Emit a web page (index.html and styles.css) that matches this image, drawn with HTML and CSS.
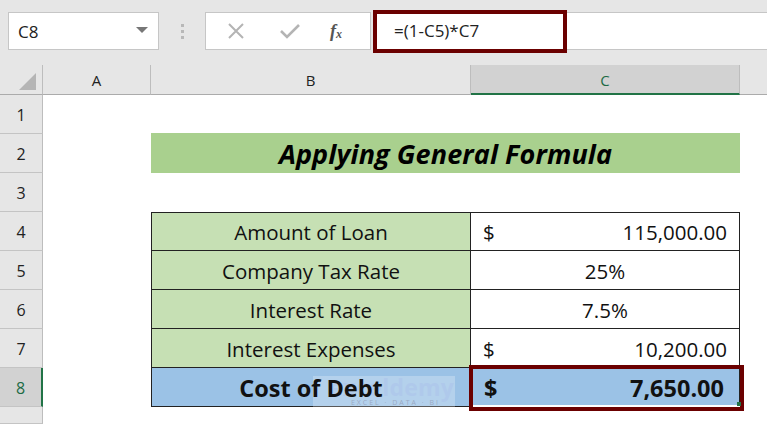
FILE: index.html
```html
<!DOCTYPE html>
<html>
<head>
<meta charset="utf-8">
<link rel="stylesheet" href="styles.css">
</head>
<body>
<div class="app">
  <div class="fbar">
    <div class="namebox"><span class="nb-text">C8</span><span class="nb-arrow"></span></div>
    <div class="dots"><i></i><i></i><i></i></div>
    <div class="btns">
      <svg class="ico-x" width="18" height="18" viewBox="0 0 18 18"><path d="M2 2 L16 16 M16 2 L2 16" stroke="#b4b4b4" stroke-width="2" fill="none"/></svg>
      <svg class="ico-ok" width="22" height="18" viewBox="0 0 22 18"><path d="M2 9 L8 15 L20 3" stroke="#b4b4b4" stroke-width="2.6" fill="none"/></svg>
      <span class="fx"><i>f</i><sub>x</sub></span>
    </div>
    <div class="fwrap">
      <div class="fbox">=(1-C5)*C7</div>
      <div class="frest"></div>
    </div>
  </div>
  <div class="sheet">
    <div class="corner"><span class="tri"></span></div>
    <div class="ch">A</div>
    <div class="ch">B</div>
    <div class="ch sel">C</div>
    <div class="ch last"></div>

    <div class="rh" style="grid-row:2">1</div>
    <div class="rh" style="grid-row:3">2</div>
    <div class="rh" style="grid-row:4">3</div>
    <div class="rh" style="grid-row:5">4</div>
    <div class="rh" style="grid-row:6">5</div>
    <div class="rh" style="grid-row:7">6</div>
    <div class="rh" style="grid-row:8">7</div>
    <div class="rh sel" style="grid-row:9">8</div>
    <div class="rh" style="grid-row:10"></div>

    <div class="title">Applying General Formula</div>

    <div class="lab top" style="grid-row:5">Amount of Loan</div>
    <div class="val top" style="grid-row:5"><span>$</span><span>115,000.00</span></div>
    <div class="lab" style="grid-row:6">Company Tax Rate</div>
    <div class="val mid" style="grid-row:6">25%</div>
    <div class="lab" style="grid-row:7">Interest Rate</div>
    <div class="val mid" style="grid-row:7">7.5%</div>
    <div class="lab" style="grid-row:8">Interest Expenses</div>
    <div class="val" style="grid-row:8"><span>$</span><span>10,200.00</span></div>
    <div class="lab res" style="grid-row:9">
      <div class="wm"><span class="wm-name">exceldemy</span><span class="wm-sub">EXCEL · DATA · BI</span></div>
      <span class="res-text">Cost of Debt</span>
    </div>
    <div class="val res" style="grid-row:9"><span>$</span><span>7,650.00</span><div class="selbox"><span class="handle"></span></div></div>
  </div>
</div>
</body>
</html>
```
FILE: styles.css
```css
* { box-sizing: border-box; }
html, body { margin: 0; padding: 0; }
body { width: 767px; height: 424px; overflow: hidden; background: #fff; font-family: "Open Sans", "Noto Sans", sans-serif; }
.app { width: 767px; height: 424px; display: flex; flex-direction: column; }

.fbar { height: 65px; background: #e6e6e6; display: flex; align-items: flex-start; padding: 12px 0 0 8px; flex: none; }
.namebox { width: 151px; height: 38px; background: #fff; border: 1px solid #c6c6c6; display: flex; align-items: center; justify-content: space-between; padding: 0 10px 0 9px; }
.nb-text { font-size: 17px; color: #222; }
.nb-arrow { width: 0; height: 0; border-left: 6px solid transparent; border-right: 6px solid transparent; border-top: 6px solid #777; margin-top: -2px; }
.dots { width: 46px; height: 38px; display: flex; flex-direction: column; align-items: center; justify-content: center; gap: 3px; }
.dots i { width: 3px; height: 3px; background: #b8b8b8; display: block; }
.btns { width: 166px; height: 38px; background: #fff; border: 1px solid #c6c6c6; display: flex; align-items: center; padding: 0 0 0 21px; }
.ico-x { margin-right: 34px; }
.ico-ok { margin-right: 29px; }
.fx { font-family: "Liberation Serif", serif; font-style: italic; font-weight: bold; font-size: 18px; color: #555; }
.fx i { font-style: italic; }
.fx sub { font-size: 12px; vertical-align: -1px; }
.fwrap { flex: 1; height: 38px; display: flex; align-items: center; margin-left: 2px; }
.fbox { width: 194px; height: 43px; border: 4px solid #6b0000; background: #fff; font-size: 17px; color: #222; padding: 5px 0 0 17px; flex: none; }
.frest { flex: 1; height: 38px; background: #fff; border-top: 1px solid #c6c6c6; border-bottom: 1px solid #c6c6c6; }

.sheet { flex: 1; display: grid; grid-template-columns: 43px 108px 320px 269px 1fr; grid-template-rows: 30px repeat(8, 39px) 1fr; background: #fff; font-family: "Open Sans", sans-serif; position: relative; }
.corner { grid-row: 1; grid-column: 1; background: #e6e6e6; border-right: 1px solid #bdbdbd; border-bottom: 1px solid #ababab; position: relative; }
.tri { position: absolute; right: 6px; bottom: 4px; width: 0; height: 0; border-left: 17px solid transparent; border-bottom: 17px solid #b5b5b5; }
.ch { grid-row: 1; background: #e6e6e6; border-right: 1px solid #bdbdbd; border-bottom: 1px solid #ababab; font-size: 15px; color: #222; display: flex; align-items: center; justify-content: center; padding-top: 1px; }
.ch.sel { background: #d2d2d2; border-bottom: 2px solid #217346; color: #1d6b45; }
.ch.last { border-right: none; }
.rh { grid-column: 1; background: #e6e6e6; border-right: 1px solid #bdbdbd; border-bottom: 1px solid #c4c4c4; font-size: 16px; color: #222; display: flex; align-items: center; justify-content: center; padding-top: 2px; }
.rh.sel { background: #d2d2d2; border-right: 2px solid #217346; color: #1d6b45; }

.title { grid-row: 3; grid-column: 3 / 5; background: #a9d08e; display: flex; align-items: center; justify-content: center; font-weight: bold; font-style: italic; font-size: 27px; color: #000; margin-top: -1px; padding-top: 1px; letter-spacing: 0.1px; }

.lab, .val { border-right: 1px solid #222; border-bottom: 1px solid #222; font-size: 20.5px; color: #111; display: flex; align-items: center; }
.lab { grid-column: 3; background: #c6e0b4; border-left: 1px solid #222; justify-content: center; padding-top: 1px; position: relative; }
.val { grid-column: 4; background: #fff; justify-content: space-between; padding: 1px 12px 0 12px; position: relative; }
.val.mid { justify-content: center; }
.top { border-top: 1px solid #222; }
.res { background: #9bc2e6; font-weight: bold; font-size: 23.5px; }
.res-text { position: relative; }
.val.res { padding: 1px 15px 0 13px; }

.selbox { position: absolute; left: -2px; top: -3px; right: -5px; bottom: -5px; border: 4px solid #6b0000; box-shadow: inset 0 -2px 0 #fff; }
.handle { position: absolute; right: -1px; bottom: 1px; width: 4px; height: 4px; background: #217346; }

.wm { position: absolute; left: 161px; top: 8px; width: 142px; height: 32px; background: rgba(255,255,255,0.25); display: flex; flex-direction: column; align-items: flex-end; padding-right: 1px; line-height: 1; }
.wm-name { font-weight: bold; font-size: 23px; color: rgba(175,200,235,0.9); letter-spacing: 0.2px; margin-top: 0; }
.wm-sub { font-weight: normal; font-size: 7px; letter-spacing: 2px; color: rgba(150,165,190,0.9); margin-top: 0; padding-right: 14px; }
```
